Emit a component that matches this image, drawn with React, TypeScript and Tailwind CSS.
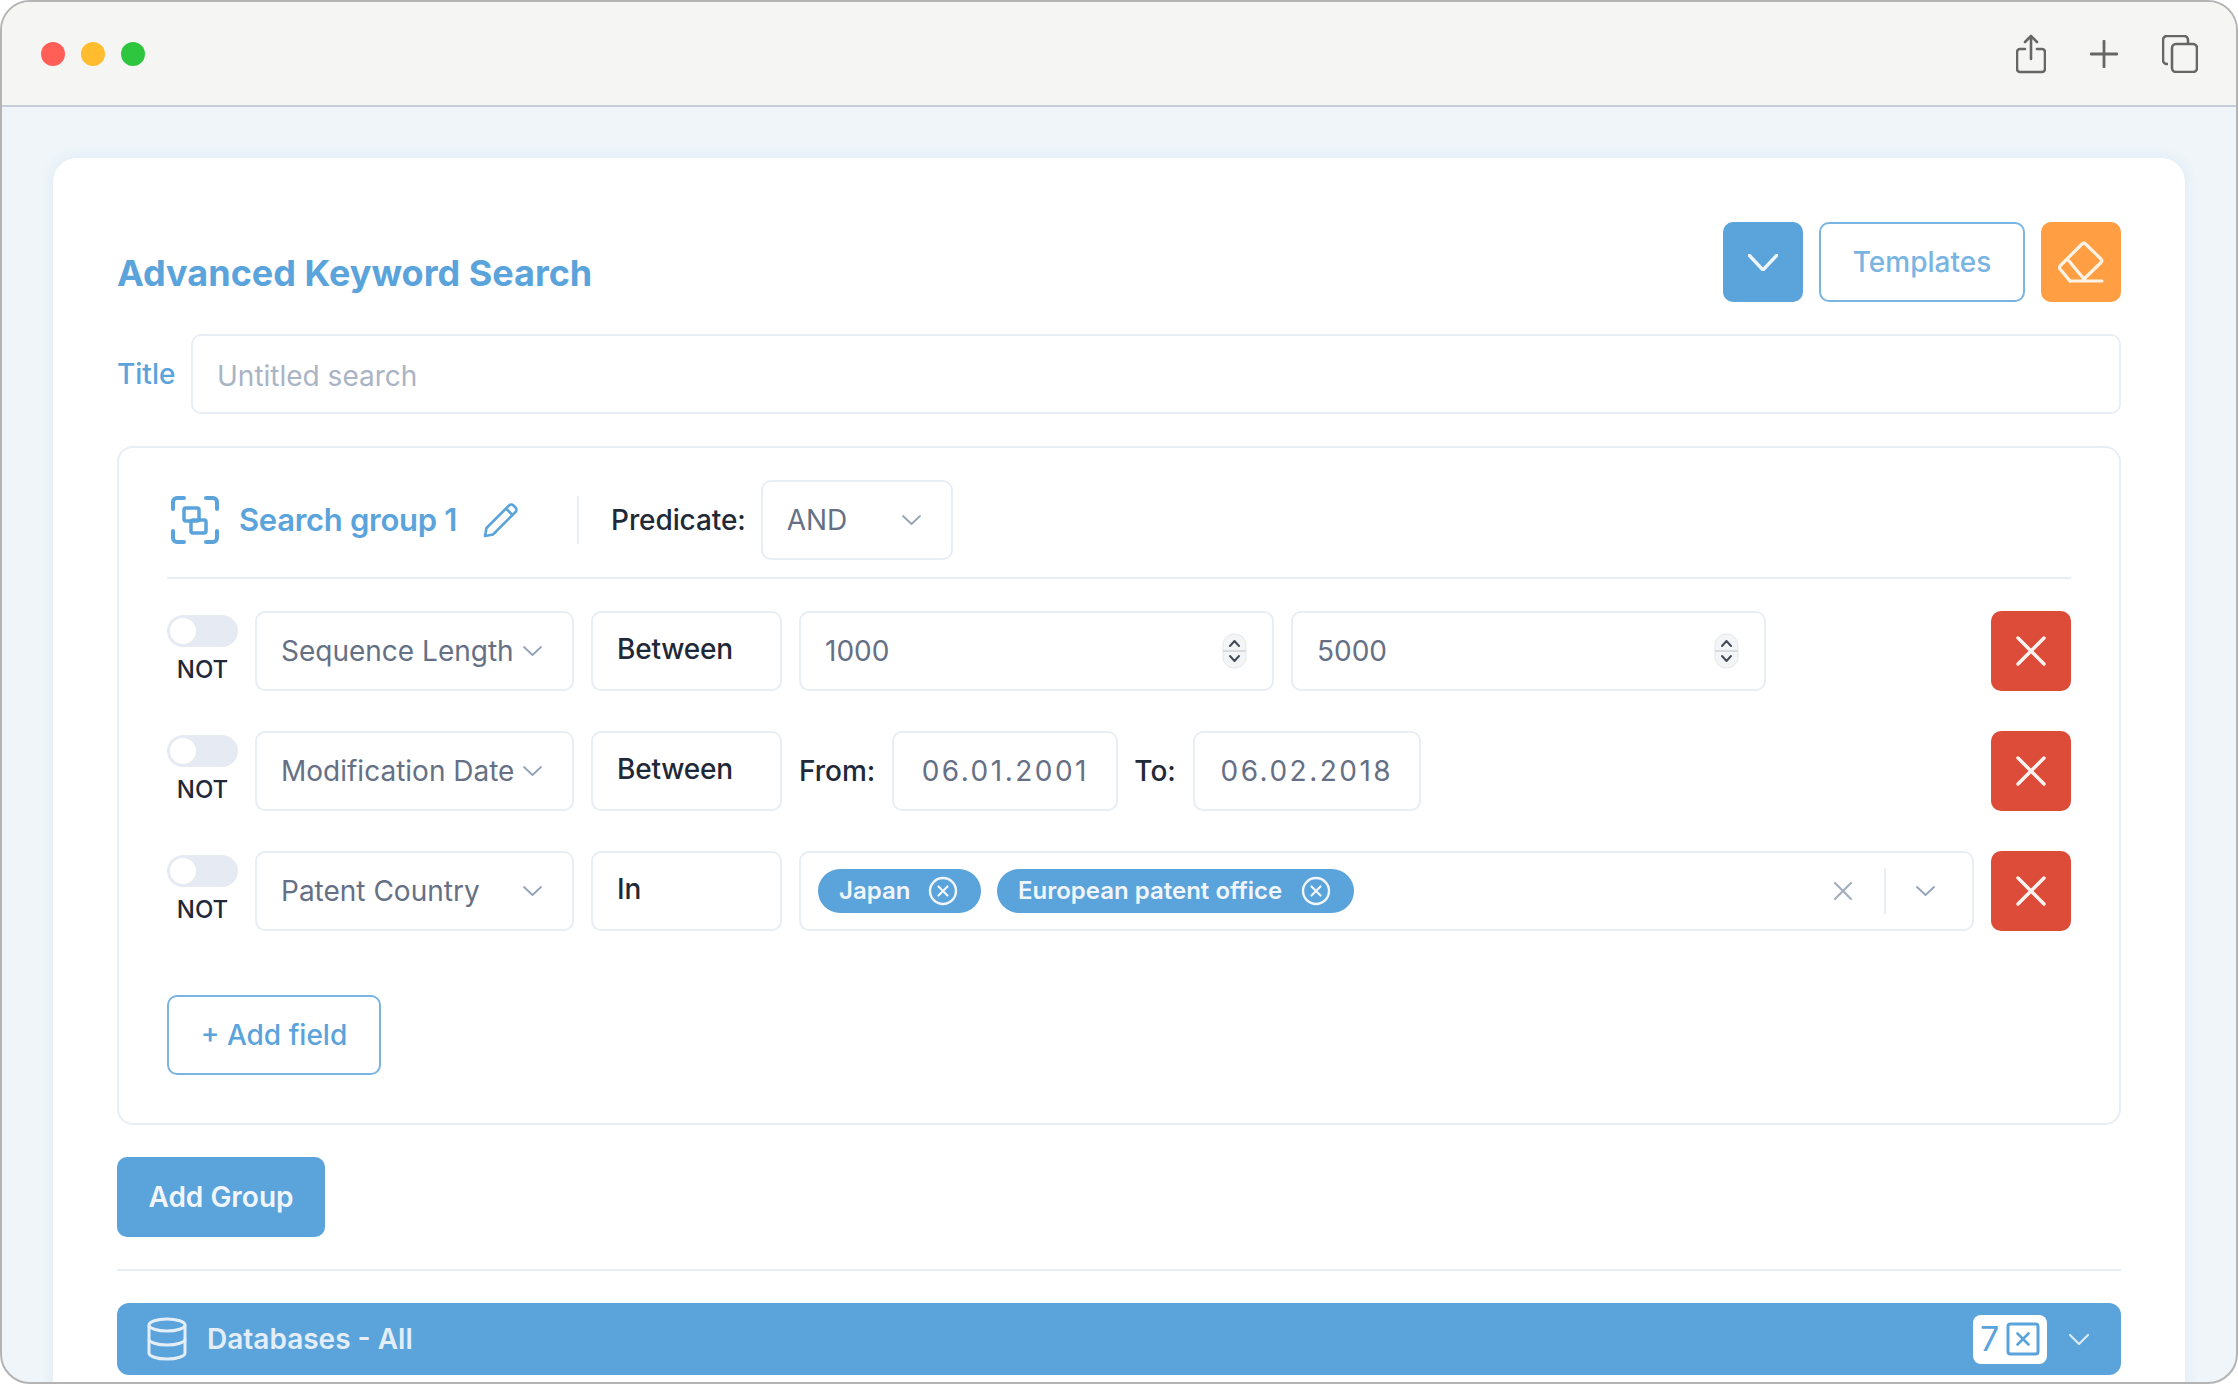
import React from "react";

function Chevron({ w = 19, h = 10, color = "#94a3b8", sw = 1.8 }: { w?: number; h?: number; color?: string; sw?: number }) {
  return (
    <svg width={w} height={h} viewBox={`0 0 ${w} ${h}`} fill="none" className="shrink-0">
      <path d={`M1 1L${w / 2} ${h - 1}L${w - 1} 1`} stroke={color} strokeWidth={sw} strokeLinecap="round" strokeLinejoin="round" />
    </svg>
  );
}

function Spinner() {
  return (
    <svg width="25" height="36" viewBox="0 0 25 36" fill="none" className="shrink-0">
      <rect x="1" y="1" width="23" height="34" rx="11" fill="#f4f5f6" stroke="#e5e7eb" strokeWidth="1" />
      <path d="M1 18H24" stroke="#d9dce0" strokeWidth="2" />
      <path d="M8 13L12.5 8L17 13" stroke="#444c58" strokeWidth="2" strokeLinecap="round" strokeLinejoin="round" />
      <path d="M8 23L12.5 28L17 23" stroke="#444c58" strokeWidth="2" strokeLinecap="round" strokeLinejoin="round" />
    </svg>
  );
}

function Box({ className = "", children }: { className?: string; children?: React.ReactNode }) {
  return (
    <div className={`flex h-[80px] shrink-0 items-center whitespace-nowrap rounded-[10px] border-2 border-[#e8eef4] bg-white text-[28px] ${className}`}>
      {children}
    </div>
  );
}

function Toggle() {
  return (
    <div className="flex w-[71px] shrink-0 flex-col items-center pt-[4px]">
      <div className="flex h-[32px] w-[71px] items-center rounded-full bg-[#e6ebf3] pl-[3px]">
        <div className="h-[26px] w-[26px] rounded-full bg-white" />
      </div>
      <div className="mt-[9px] text-[24px] font-medium leading-[28px] text-[#1f2937]">NOT</div>
    </div>
  );
}

function Del() {
  return (
    <button className="flex h-[80px] w-[80px] shrink-0 items-center justify-center rounded-[10px] bg-[#dd4b39]">
      <svg width="32" height="32" viewBox="0 0 32 32" fill="none">
        <path d="M3 3L29 29M29 3L3 29" stroke="#fdf3f1" strokeWidth="3.4" strokeLinecap="round" />
      </svg>
    </button>
  );
}

function FieldSelect({ label }: { label: string }) {
  return (
    <Box className="w-[319px] justify-between pl-[24px] pr-[30px] text-[#667085]">
      <span>{label}</span>
      <Chevron />
    </Box>
  );
}

function Op({ label }: { label: string }) {
  return <Box className="w-[191px] pb-[5px] pl-[24px] font-medium tracking-[-0.2px] text-[#1f2937]">{label}</Box>;
}

function Chip({ label, className }: { label: string; className: string }) {
  return (
    <div className={`flex h-[44px] items-center justify-between rounded-full bg-[#5ba3db] pl-[21px] pr-[23px] text-[24px] font-semibold text-[#f0f6fb] ${className}`}>
      <span>{label}</span>
      <svg width="30" height="30" viewBox="0 0 30 30" fill="none">
        <circle cx="15" cy="15" r="13" stroke="#f0f6fb" strokeWidth="2.4" />
        <path d="M10.5 10.5L19.5 19.5M19.5 10.5L10.5 19.5" stroke="#f0f6fb" strokeWidth="2.2" strokeLinecap="round" />
      </svg>
    </div>
  );
}

export default function App() {
  return (
    <div className="flex h-[1384px] w-[2238px] flex-col overflow-hidden rounded-[30px] border-2 border-[#b4b4b4] bg-[#eff5f9] [font-family:Inter,sans-serif]">
      {/* title bar */}
      <div className="flex h-[105px] shrink-0 items-center justify-between border-b-2 border-[#c6cfd9] bg-[#f5f5f3] pl-[39px] pr-[38px]">
        <div className="flex gap-[16px]">
          <div className="h-[24px] w-[24px] rounded-full bg-[#ff5f57]" />
          <div className="h-[24px] w-[24px] rounded-full bg-[#febc2e]" />
          <div className="h-[24px] w-[24px] rounded-full bg-[#2ec63f]" />
        </div>
        <div className="flex items-center gap-[44px]">
          <svg width="30" height="40" viewBox="0 0 30 40" fill="none" stroke="#666" strokeWidth="2.6" strokeLinecap="round" strokeLinejoin="round">
            <path d="M9 15H4a3 3 0 0 0-3 3v17a3 3 0 0 0 3 3h22a3 3 0 0 0 3-3V18a3 3 0 0 0-3-3h-5" />
            <path d="M15 25V2M9 8l6-6 6 6" />
          </svg>
          <svg width="28" height="28" viewBox="0 0 28 28" fill="none" stroke="#666" strokeWidth="2.8" strokeLinecap="round">
            <path d="M14 1V27M1 14H27" />
          </svg>
          <svg width="36" height="38" viewBox="0 0 36 38" fill="none" stroke="#666" strokeWidth="2.6" strokeLinejoin="round">
            <path d="M6 29H5a4 4 0 0 1-4-4V5a4 4 0 0 1 4-4h17a4 4 0 0 1 4 4v3" />
            <rect x="10" y="9" width="25" height="28" rx="4" />
          </svg>
        </div>
      </div>

      {/* body */}
      <div className="min-h-0 flex-1 px-[51px] pt-[51px]">
        <div className="h-[1300px] rounded-[24px] bg-white px-[64px] pt-[64px] shadow-[0_0_14px_rgba(91,163,219,0.12)]">
          {/* header */}
          <div className="flex h-[80px] items-start justify-between">
            <h1 className="mt-[31px] text-[36px] font-bold leading-[40px] text-[#5ba3db]">Advanced Keyword Search</h1>
            <div className="flex gap-[16px]">
              <button className="flex h-[80px] w-[80px] items-center justify-center rounded-[10px] bg-[#5ba3db]">
                <Chevron w={30} h={17} color="#eef5fb" sw={3.4} />
              </button>
              <button className="h-[80px] w-[206px] rounded-[10px] border-2 border-[#7ab4e2] bg-white text-[28px] font-medium text-[#7ab4e2]">
                Templates
              </button>
              <button className="flex h-[80px] w-[80px] items-center justify-center rounded-[10px] bg-[#ff9e42]">
                <svg width="46" height="42" viewBox="0 0 46 42" fill="none" stroke="#fff3e6" strokeWidth="3.2" strokeLinecap="round" strokeLinejoin="round">
                  <path d="M12 40L2 28a3 3 0 0 1 0-3L24 3a2.5 2.5 0 0 1 3.5 0L43 18a2.5 2.5 0 0 1 0 3.5L25 39" />
                  <path d="M11 20L26 38" />
                  <path d="M12 40H44" />
                </svg>
              </button>
            </div>
          </div>

          {/* title */}
          <div className="mt-[32px] flex items-center gap-[18px]">
            <label className="w-[56px] text-[28px] font-medium text-[#5ba3db]">Title</label>
            <Box className="flex-1 pl-[24px] pt-[3px] text-[#aab4c5]">Untitled search</Box>
          </div>

          {/* group */}
          <div className="mt-[32px] rounded-[16px] border-2 border-[#e8eef4] pb-[48px] pl-[48px] pr-[48px] pt-[33px]">
            <div className="flex h-[78px] items-center">
              <svg width="52" height="52" viewBox="0 0 52 52" fill="none" stroke="#5ba3db" className="ml-[2px] shrink-0">
                <path d="M4 15V8a4 4 0 0 1 4-4h7M37 4h7a4 4 0 0 1 4 4v7M48 37v7a4 4 0 0 1-4 4h-7M15 48H8a4 4 0 0 1-4-4v-7" strokeWidth="4" strokeLinecap="round" />
                <rect x="15" y="14" width="15" height="13" rx="2" strokeWidth="3.5" />
                <rect x="22" y="26" width="15" height="13" rx="2" strokeWidth="3.5" />
              </svg>
              <span className="ml-[18px] text-[31px] font-semibold tracking-[-0.3px] text-[#5ba3db]">Search group 1</span>
              <svg width="38" height="38" viewBox="0 0 38 38" fill="none" stroke="#5ba3db" strokeWidth="2.6" strokeLinejoin="round" className="ml-[25px] shrink-0">
                <path d="M3 35l1.500-8L27 4.500a3.200 3.200 0 0 1 4.500 0l2 2a3.200 3.200 0 0 1 0 4.500L11 33.500z" />
                <path d="M24 7.500l6.500 6.500" />
              </svg>
              <div className="ml-[57px] h-[48px] w-[2px] bg-[#e8eef4]" />
              <span className="ml-[32px] text-[28px] font-medium tracking-[-0.1px] text-[#1f2937]">Predicate:</span>
              <Box className="ml-[15px] w-[192px] justify-between pl-[24px] pr-[30px] text-[#667085]">
                <span>AND</span>
                <Chevron />
              </Box>
            </div>
            <div className="mt-[18px] h-[2px] bg-[#e8eef4]" />

            <div className="mt-[32px] flex flex-col gap-[40px]">
              <div className="flex gap-[17px]">
                <Toggle />
                <FieldSelect label="Sequence Length" />
                <Op label="Between" />
                <Box className="w-[475px] justify-between pl-[24px] pr-[25px] text-[#667085]">
                  <span>1000</span>
                  <Spinner />
                </Box>
                <Box className="w-[475px] justify-between pl-[24px] pr-[25px] text-[#667085]">
                  <span>5000</span>
                  <Spinner />
                </Box>
                <div className="flex-1" />
                <Del />
              </div>

              <div className="flex items-start gap-[17px]">
                <Toggle />
                <FieldSelect label="Modification Date" />
                <Op label="Between" />
                <div className="flex h-[80px] items-center text-[28px] font-medium text-[#1f2937]">From:</div>
                <Box className="w-[226px] justify-center tracking-[2.5px] text-[#667085]">06.01.2001</Box>
                <div className="-ml-[1px] flex h-[80px] items-center text-[28px] font-medium text-[#1f2937]">To:</div>
                <Box className="w-[228px] justify-center tracking-[2.5px] text-[#667085]">06.02.2018</Box>
                <div className="flex-1" />
                <Del />
              </div>

              <div className="flex gap-[17px]">
                <Toggle />
                <FieldSelect label="Patent Country" />
                <Op label="In" />
                <Box className="min-w-0 flex-1 shrink pl-[17px] pr-[37px]">
                  <Chip label="Japan" className="w-[163px]" />
                  <Chip label="European patent office" className="ml-[16px] w-[357px]" />
                  <div className="flex-1" />
                  <svg width="20" height="20" viewBox="0 0 20 20" fill="none" stroke="#a4afbe" strokeWidth="2.2" strokeLinecap="round">
                    <path d="M2 2L18 18M18 2L2 18" />
                  </svg>
                  <div className="ml-[31px] mr-[30px] h-[46px] w-[2px] bg-[#e8eef4]" />
                  <Chevron />
                </Box>
                <Del />
              </div>
            </div>

            <button className="mt-[64px] block h-[80px] w-[214px] rounded-[10px] border-2 border-[#7ab4e2] bg-white text-[28px] font-medium text-[#5ba3db]">
              + Add field
            </button>
          </div>

          <button className="mt-[32px] block h-[80px] w-[208px] rounded-[10px] bg-[#5ba3db] text-[28px] font-semibold text-[#f0f6fb]">
            Add Group
          </button>

          <div className="mt-[32px] h-[2px] bg-[#e8eef4]" />

          <div className="mt-[32px] flex h-[72px] items-center rounded-[12px] bg-[#5ba3db] pl-[30px] pr-[32px]">
            <svg width="40" height="44" viewBox="0 0 40 44" fill="none" stroke="#e4eef8" strokeWidth="3" className="shrink-0">
              <ellipse cx="20" cy="8" rx="18" ry="6" />
              <path d="M2 8V36c0 3.3 8 6 18 6s18-2.700 18-6V8" />
              <path d="M2 22c0 3.300 8 6 18 6s18-2.700 18-6" />
            </svg>
            <span className="ml-[20px] text-[28px] font-semibold text-[#e4eef8]">Databases - All</span>
            <div className="flex-1" />
            <div className="flex h-[49px] w-[74px] items-center justify-between rounded-[8px] bg-white pl-[7px] pr-[7px] text-[34px] leading-none text-[#5ba3db]">
              <span>7</span>
              <svg width="34" height="34" viewBox="0 0 34 34" fill="none" stroke="#5ba3db">
                <rect x="2" y="2" width="30" height="30" rx="2.500" strokeWidth="3" />
                <path d="M11.500 11.500L22.500 22.500M22.500 11.500L11.500 22.500" strokeWidth="2.600" strokeLinecap="round" />
              </svg>
            </div>
            <div className="ml-[22px]">
              <Chevron w={20} h={11} color="#dbe9f5" sw={2.2} />
            </div>
          </div>
        </div>
      </div>
    </div>
  );
}
